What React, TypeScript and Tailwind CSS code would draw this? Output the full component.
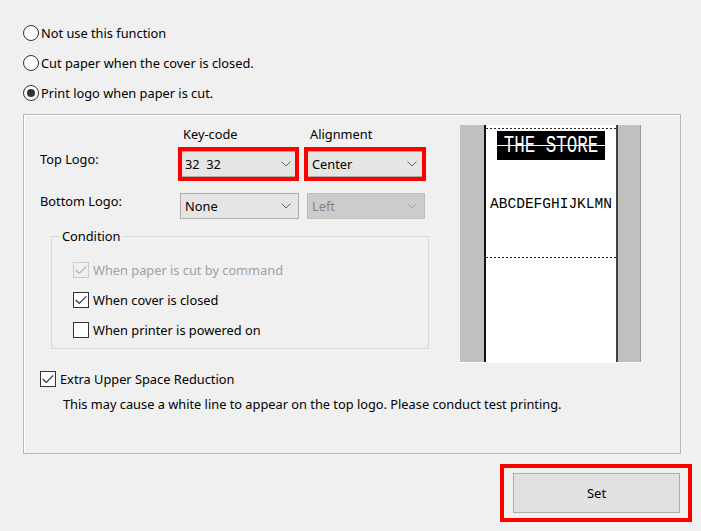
import type { ReactNode } from 'react';

function Chevron({ color }: { color: string }) {
  return (
    <svg width="10" height="6" viewBox="0 0 10 6" className="shrink-0">
      <polyline points="0.5,0.5 5,5 9.5,0.5" fill="none" stroke={color} strokeWidth="1" />
    </svg>
  );
}

function Combo({ value, disabled = false }: { value: string; disabled?: boolean }) {
  return (
    <div
      className={
        disabled
          ? 'h-[26px] flex items-center justify-between pl-[4px] pr-[7px] border border-[#bfbfbf] bg-[#cccccc] text-[#838383]'
          : 'h-[26px] flex items-center justify-between pl-[4px] pr-[7px] border border-[#acacac] bg-[#e5e5e5] text-black'
      }
    >
      <span className="whitespace-pre">{value}</span>
      <Chevron color={disabled ? '#a6a6a6' : '#606060'} />
    </div>
  );
}

function Radio({ checked = false, label }: { checked?: boolean; label: string }) {
  return (
    <div className="flex items-center h-[17px]">
      <span className="w-[16px] h-[16px] rounded-full border border-[#333333] bg-white flex items-center justify-center">
        {checked && <span className="w-[8px] h-[8px] rounded-full bg-[#333333]" />}
      </span>
      <span className="ml-[2px]">{label}</span>
    </div>
  );
}

function Check({ checked = false, disabled = false, label }: { checked?: boolean; disabled?: boolean; label: string }) {
  return (
    <div className="flex items-center h-[16px]">
      <span
        className={
          disabled
            ? 'w-[16px] h-[16px] border border-[#cccccc] bg-[#f0f0f0] flex items-center justify-center'
            : 'w-[16px] h-[16px] border border-[#333333] bg-white flex items-center justify-center'
        }
      >
        {checked && (
          <svg width="12" height="10" viewBox="0 0 12 10">
            <polyline points="0.8,5 4.3,8.5 11.2,1.3" fill="none" stroke={disabled ? '#b5b5b5' : '#333333'} strokeWidth="1.2" />
          </svg>
        )}
      </span>
      <span className={disabled ? 'ml-[4px] text-[#a0a0a0]' : 'ml-[4px]'}>{label}</span>
    </div>
  );
}

// red highlight frame drawn over a control
function Highlight({ children, className }: { children: ReactNode; className: string }) {
  return (
    <div className="relative">
      {children}
      <div className={`absolute border-4 border-[#ff0000] pointer-events-none ${className}`} />
    </div>
  );
}

function Dotted() {
  return <div className="h-px bg-[repeating-linear-gradient(90deg,#222222_0_2px,transparent_2px_4px)]" />;
}

function Preview() {
  return (
    <div className="flex w-[183px] h-[238px] border-b border-white">
      <div className="w-[24px] bg-[#c0c0c0]" />
      <div className="w-[134px] bg-white border-l-2 border-r-2 border-l-[#111111] border-r-[#404040] flex flex-col">
        <div className="mt-[3px]">
          <Dotted />
        </div>
        <div className="mt-[2px] mx-auto relative w-[108px] h-[29px] bg-black flex items-center justify-center overflow-hidden">
          <span className="font-['Liberation_Mono',monospace] text-[17.5px] leading-none text-white whitespace-pre scale-y-[1.4]">
            THE STORE
          </span>
          <div className="absolute left-0 right-0 top-[14px] h-px bg-white" />
        </div>
        <div className="mt-[36px] h-[16px] flex items-center justify-center font-['Liberation_Mono',monospace] text-[14.5px] text-black">
          ABCDEFGHIJKLMN
        </div>
        <div className="mt-[45px]">
          <Dotted />
        </div>
      </div>
      <div className="w-[22px] bg-[#c0c0c0]" />
      <div className="w-px bg-[#9a9a9a]" />
    </div>
  );
}

export default function App() {
  return (
    <div className="w-[701px] h-[531px] bg-[#f0f0f0] text-black font-['Noto_Sans',sans-serif] text-[12.8px] leading-[16px] overflow-hidden">
      <div className="pt-[24px] pl-[23px] flex flex-col gap-[13px]">
        <Radio label="Not use this function" />
        <Radio label="Cut paper when the cover is closed." />
        <Radio checked label="Print logo when paper is cut." />
      </div>

      <div className="mt-[13px] ml-[23px] w-[658px] h-[340px] border border-[#b9b9b9] shadow-[inset_1px_1px_0_#ffffff]">
        <div className="flex items-start">
          <div className="w-[436px] pl-[16px]">
            <div className="mt-[11px] flex h-[16px]">
              <div className="w-[140px]" />
              <div className="w-[119px] pl-[3px]">Key-code</div>
              <div className="w-[118px] ml-[8px] pl-[3px]">Alignment</div>
            </div>
            <div className="mt-[9px] flex items-start">
              <div className="w-[140px] h-[16px]">Top Logo:</div>
              <div className="w-[119px]">
                <Highlight className="-left-[2px] right-0 -top-[4px] -bottom-[4px]">
                  <Combo value="32  32" />
                </Highlight>
              </div>
              <div className="w-[118px] ml-[8px]">
                <Highlight className="-left-[3px] -right-[1px] -top-[4px] -bottom-[4px]">
                  <Combo value="Center" />
                </Highlight>
              </div>
            </div>
            <div className="mt-[16px] flex items-start">
              <div className="w-[140px] h-[16px]">Bottom Logo:</div>
              <div className="w-[119px]">
                <Combo value="None" />
              </div>
              <div className="w-[118px] ml-[8px]">
                <Combo value="Left" disabled />
              </div>
            </div>
            <div className="relative mt-[17px] ml-[11px] w-[378px] h-[113px] border border-[#d9d9d9] pt-[25px] pl-[21px] flex flex-col gap-[14px]">
              <span className="absolute -top-[9px] left-[8px] px-[2px] bg-[#f0f0f0]">Condition</span>
              <Check checked disabled label="When paper is cut by command" />
              <Check checked label="When cover is closed" />
              <Check label="When printer is powered on" />
            </div>
          </div>
          <div className="mt-[10px]">
            <Preview />
          </div>
        </div>

        <div className="mt-[8px] pl-[16px]">
          <Check checked label="Extra Upper Space Reduction" />
        </div>
        <div className="mt-[9px] pl-[39px]">
          This may cause a white line to appear on the top logo. Please conduct test printing.
        </div>
      </div>

      <div className="mt-[19px] pr-[21px] flex justify-end">
        <Highlight className="-left-[13px] -right-[12px] -top-[9px] -bottom-[9px]">
          <button className="w-[167px] h-[40px] border border-[#adadad] bg-[#e1e1e1] text-black text-[13px]">
            Set
          </button>
        </Highlight>
      </div>
    </div>
  );
}
